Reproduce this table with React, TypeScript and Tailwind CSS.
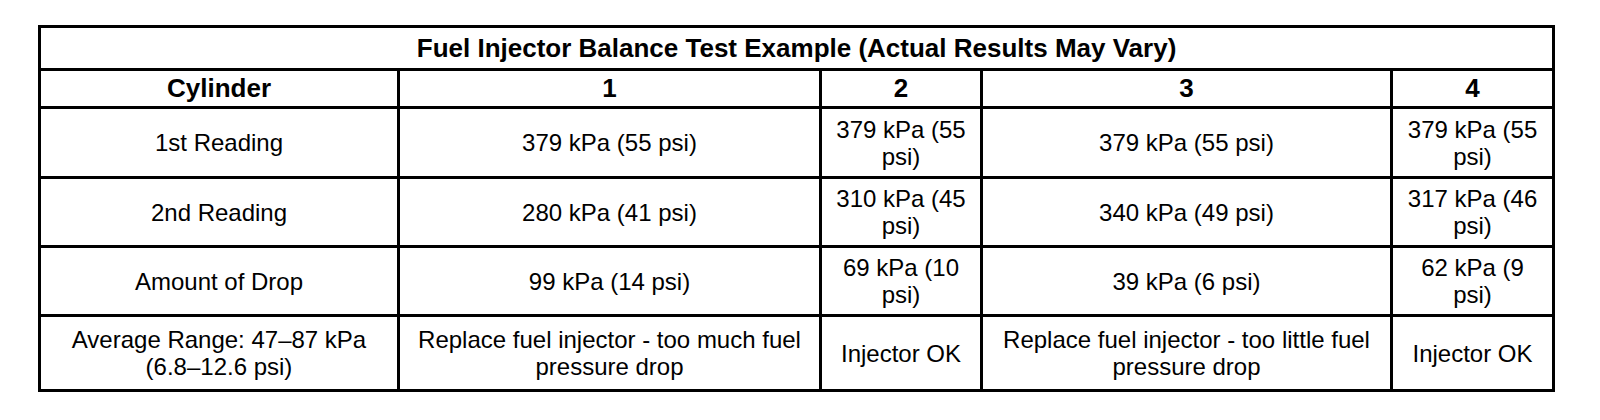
const rows: { label: string; cells: string[] }[] = [
  {
    label: "1st Reading",
    cells: ["379 kPa (55 psi)", "379 kPa (55 psi)", "379 kPa (55 psi)", "379 kPa (55 psi)"],
  },
  {
    label: "2nd Reading",
    cells: ["280 kPa (41 psi)", "310 kPa (45 psi)", "340 kPa (49 psi)", "317 kPa (46 psi)"],
  },
  {
    label: "Amount of Drop",
    cells: ["99 kPa (14 psi)", "69 kPa (10 psi)", "39 kPa (6 psi)", "62 kPa (9 psi)"],
  },
  {
    label: "Average Range: 47–87 kPa (6.8–12.6 psi)",
    cells: [
      "Replace fuel injector - too much fuel pressure drop",
      "Injector OK",
      "Replace fuel injector - too little fuel pressure drop",
      "Injector OK",
    ],
  },
];

const rowHeights = ["h-[70px]", "h-[69px]", "h-[69px]", "h-[75px]"];

export default function App() {
  return (
    <div className="bg-white w-[1600px] h-[420px] pt-[25px] pl-[38px] font-['Liberation_Sans',Arial,sans-serif] text-black text-[24px] leading-[27px]">
      <table className="table-fixed border-collapse border-[3px] border-black w-[1517px]">
        <colgroup>
          <col className="w-[359px]" />
          <col className="w-[422px]" />
          <col className="w-[161px]" />
          <col className="w-[410px]" />
          <col className="w-[162px]" />
        </colgroup>
        <thead>
          {/* Title */}
          <tr className="h-[43px]">
            <th colSpan={5} className="border-[3px] border-black font-bold text-[26px] text-center align-middle">
              Fuel Injector Balance Test Example (Actual Results May Vary)
            </th>
          </tr>
          <tr className="h-[38px] text-[26px]">
            <th className="border-[3px] border-black font-bold text-center align-middle">Cylinder</th>
            <th className="border-[3px] border-black font-bold text-center align-middle">1</th>
            <th className="border-[3px] border-black font-bold text-center align-middle">2</th>
            <th className="border-[3px] border-black font-bold text-center align-middle">3</th>
            <th className="border-[3px] border-black font-bold text-center align-middle">4</th>
          </tr>
        </thead>
        <tbody>
          {rows.map((row, i) => (
            <tr key={row.label} className={rowHeights[i]}>
              <td className="border-[3px] border-black text-center align-middle px-2">{row.label}</td>
              {row.cells.map((c, j) => (
                <td key={j} className="border-[3px] border-black text-center align-middle px-2">
                  {c}
                </td>
              ))}
            </tr>
          ))}
        </tbody>
      </table>
    </div>
  );
}
